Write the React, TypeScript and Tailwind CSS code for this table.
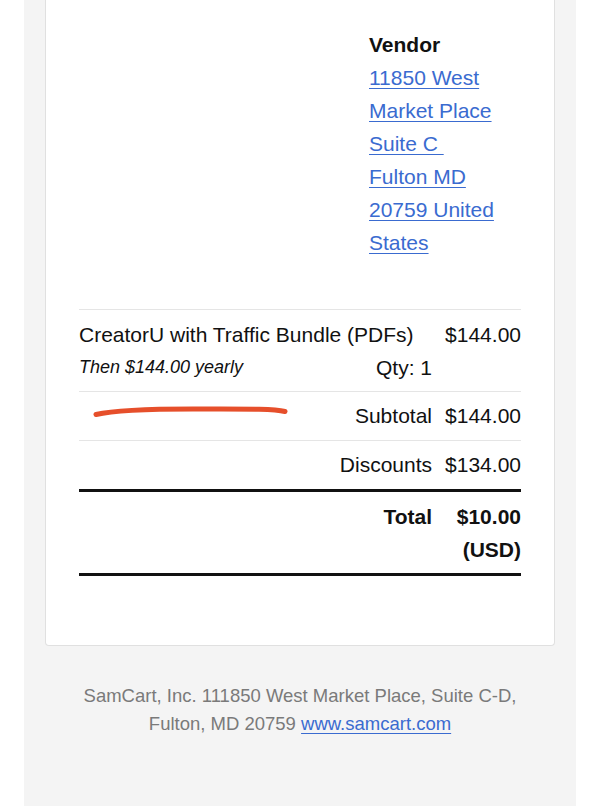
export default function App() {
  const row = "flex items-start border-t border-[#e5e5e5] py-2 text-[21px] leading-[32px] text-[#111]"

  return (
    <div className="min-h-screen bg-white font-['Liberation_Sans',Arial,sans-serif]">
      <div className="mx-6 min-h-[806px] bg-[#f4f4f4] px-[21px]">
        <div className="rounded-b-[4px] border border-t-0 border-[#e0e0e0] bg-white px-[33px] pb-[69px] pt-[28px]">
          {/* vendor address */}
          <div className="flex justify-end">
            <div className="w-[152px] text-[21px] leading-[33px]">
              <p className="font-bold text-[#111]">Vendor</p>
              <a href="#" className="text-[#3a6bd0] underline decoration-1 underline-offset-[3px]">
                11850 West
                <br />
                Market Place
                <br />
                Suite C&nbsp;
                <br />
                Fulton MD
                <br />
                20759 United
                <br />
                States
              </a>
            </div>
          </div>

          {/* line items */}
          <div className="mt-[50px]">
            <div className="border-t border-[#e5e5e5] pb-[7px] pt-2 text-[#111]">
              <div className="flex text-[21px] leading-[33px]">
                <span className="flex-1">CreatorU with Traffic Bundle (PDFs)</span>
                <span className="w-[89px] text-right">$144.00</span>
              </div>
              <div className="flex items-center leading-[33px]">
                <span className="flex-1 text-[18px] italic">Then $144.00 yearly</span>
                <span className="text-[21px]">Qty: 1</span>
                <span className="w-[89px]" />
              </div>
            </div>

            <div className={`relative ${row}`}>
              <svg
                className="absolute left-[14px] top-[12px]"
                width="196"
                height="14"
                viewBox="0 0 196 14"
                fill="none"
              >
                <path
                  d="M3 10.5 C 18 7, 50 5, 100 5 S 180 4.5, 192 7.5"
                  stroke="#e64f2b"
                  strokeWidth="5"
                  strokeLinecap="round"
                />
              </svg>
              <span className="flex-1 text-right">Subtotal</span>
              <span className="w-[89px] text-right">$144.00</span>
            </div>

            <div className={row}>
              <span className="flex-1 text-right">Discounts</span>
              <span className="w-[89px] text-right">$134.00</span>
            </div>

            <div className="flex items-start border-y-[3px] border-[#111] pb-[7px] pt-2 text-[21px] font-bold leading-[33px] text-[#111]">
              <span className="flex-1 text-right">Total</span>
              <span className="w-[89px] text-right">$10.00 (USD)</span>
            </div>
          </div>
        </div>

        {/* footer */}
        <p className="pt-[36px] text-center text-[18.5px] leading-[28px] text-[#7a7a7a]">
          SamCart, Inc. 111850 West Market Place, Suite C-D,
          <br />
          Fulton, MD 20759{" "}
          <a href="#" className="text-[#3a6bd0] underline decoration-1 underline-offset-[3px]">
            www.samcart.com
          </a>
        </p>
      </div>
    </div>
  )
}
